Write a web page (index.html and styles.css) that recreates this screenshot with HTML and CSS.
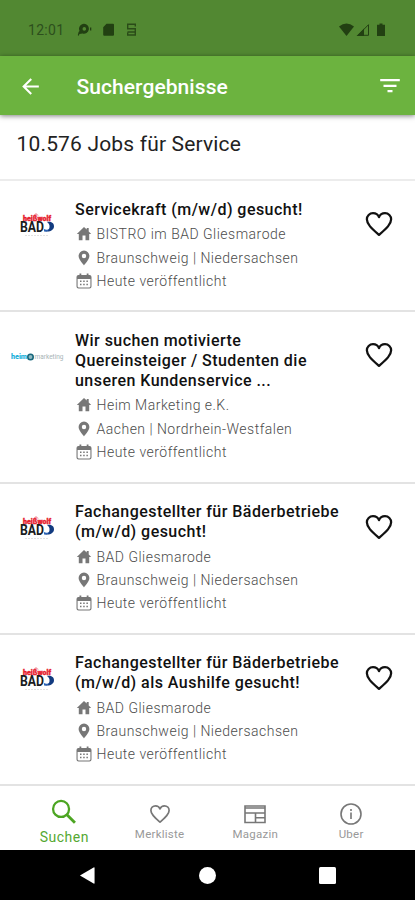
FILE: index.html
```html
<!DOCTYPE html>
<html lang="de">
<head>
<meta charset="utf-8">
<title>Suchergebnisse</title>
<link rel="stylesheet" href="styles.css">
</head>
<body>
<svg class="defs" width="0" height="0" aria-hidden="true">
  <symbol id="heart" viewBox="0 0 24 24"><path fill="none" stroke="currentColor" stroke-width="1.700" stroke-linejoin="round" d="M12 20.200C6.700 15.500 2.900 12.300 2.900 8.500 2.900 5.900 4.900 3.900 7.500 3.900c1.900 0 3.800 1.200 4.500 3 .7-1.800 2.600-3 4.500-3 2.600 0 4.600 2 4.600 4.600 0 3.800-3.800 7-9.100 11.700z"/></symbol>
  <symbol id="home" viewBox="0 0 16 16"><path d="M8 1 .8 8h2v6.200h3.700V9.600h3v4.600h3.700V8h2L12.700 5.400V2h-2v1.500z"/></symbol>
  <symbol id="pin" viewBox="0 0 16 16"><path fill-rule="evenodd" d="M8 .6a5.400 5.400 0 0 0-5.400 5.500C2.600 9.800 8 15.400 8 15.400s5.400-5.600 5.400-9.300A5.400 5.400 0 0 0 8 .6zm0 3.200a2.200 2.200 0 1 1 0 4.400 2.200 2.200 0 0 1 0-4.400z"/></symbol>
  <symbol id="calendar" viewBox="0 0 16 16"><path fill-rule="evenodd" d="M3.500.5h1.800V2h5.400V.5h1.800V2h1a2 2 0 0 1 2 2v9.500a2 2 0 0 1-2 2h-11a2 2 0 0 1-2-2V4a2 2 0 0 1 2-2h1zM1.600 6v7.300q0 1.100 1.100 1.100h10.600q1.100 0 1.100-1.100V6z"/><path d="M4 7.500h1.500V9H4zm3.200 0h1.500V9H7.200zm3.200 0h1.500V9h-1.500zM4 10.800h1.500v1.500H4zm3.200 0h1.500v1.500H7.200zm3.200 0h1.500v1.500h-1.500z"/></symbol>
  <symbol id="bad" viewBox="0 0 36 26">
    <path fill="#f3a0a8" d="M13 2.500 16 0 19 2.500z"/>
    <text x="3" y="7.600" class="bad-top" textLength="28" lengthAdjust="spacingAndGlyphs">heißwolf</text>
    <text x="0" y="19" class="bad-name" textLength="24" lengthAdjust="spacingAndGlyphs">BAD</text>
    <path fill="#123b80" d="M27 9c4-.8 7 1 7 4.300 0 4-4.500 6.200-9.500 4.900 3-.2 4.700-1.500 5-4 .3-2.200-.7-4.200-2.500-5.200z"/>
    <path fill="#2a62b4" d="M24 16c2 1.300 4 .8 5.500-.8-.7 2.700-3 3.800-5.500 3.200z"/>
    <path stroke="#e2e2e2" stroke-width="1.200" stroke-dasharray="2 1" d="M5 22.500h24"/>
  </symbol>
</svg>

<header class="status">
  <span class="clock">12:01</span>
  <svg class="s-left" viewBox="0 0 62 14"><path fill-rule="evenodd" d="M7 .8a5 5 0 1 1-1.500 9.800L2.500 11l-1 2L.8 12l.8-3L2.500 8A5 5 0 0 1 7 .8zm.3 3.300a1.800 1.800 0 1 0 0 3.600 1.800 1.800 0 0 0 0-3.600z"/><path d="M13 4.500h1.300v3H13zM29.500.8H36a1 1 0 0 1 1 1v10a1 1 0 0 1-1 1h-8.800a1 1 0 0 1-1-1V4.300z"/><path fill="none" stroke="#2a4b18" stroke-width="1.400" d="M58.300 3.500V1.300h-7.600v4.500h7.600V12h-7.600V9.500M50.500 9h8"/></svg>
  <svg class="s-right" viewBox="0 0 48 14"><path d="M0 3.500q7.500-6 15 0L7.500 13z"/><path fill="none" stroke="#224012" d="M19 12.300 29.500 1.700v10.600z"/><path d="M17.500 13 25 5.500V13zM40.500.5h3v1.300H46V13h-8V1.800h2.500z"/></svg>
</header>

<div class="appbar">
  <svg class="back" viewBox="0 0 24 24"><path d="M20 11H7.830l5.590-5.590L12 4l-8 8 8 8 1.410-1.410L7.830 13H20z"/></svg>
  <h1>Suchergebnisse</h1>
  <svg class="filter" viewBox="0 0 20 14"><path d="M.2 0h19.600v2.300H.2zM3.500 5.700h13V8h-13zM7.500 11h5v2.300h-5z"/></svg>
</div>

<main>
  <h2 class="count">10.576 Jobs für Service</h2>

  <article class="job one">
    <div class="logo"><svg class="bad"><use href="#bad"/></svg></div>
    <div class="info">
      <h3>Servicekraft (m/w/d) gesucht!</h3>
      <p><svg><use href="#home"/></svg><span>BISTRO im BAD Gliesmarode</span></p>
      <p><svg><use href="#pin"/></svg><span>Braunschweig | Niedersachsen</span></p>
      <p><svg><use href="#calendar"/></svg><span>Heute veröffentlicht</span></p>
    </div>
    <svg class="fav"><use href="#heart"/></svg>
  </article>

  <article class="job three">
    <div class="logo"><svg class="heim" viewBox="0 0 54 12"><text class="heim-a" x="0" y="8.300" textLength="16" lengthAdjust="spacingAndGlyphs">heim</text><circle cx="19.500" cy="6" r="2.700" fill="#8fb9c2" stroke="#18677c" stroke-width="1.600"/><text class="heim-b" x="23.500" y="8.300" textLength="29" lengthAdjust="spacingAndGlyphs">marketing</text></svg></div>
    <div class="info">
      <h3>Wir suchen motivierte<br>Quereinsteiger / Studenten die<br>unseren Kundenservice ...</h3>
      <p><svg><use href="#home"/></svg><span>Heim Marketing e.K.</span></p>
      <p><svg><use href="#pin"/></svg><span>Aachen | Nordrhein-Westfalen</span></p>
      <p><svg><use href="#calendar"/></svg><span>Heute veröffentlicht</span></p>
    </div>
    <svg class="fav"><use href="#heart"/></svg>
  </article>

  <article class="job two">
    <div class="logo"><svg class="bad"><use href="#bad"/></svg></div>
    <div class="info">
      <h3>Fachangestellter für Bäderbetriebe<br>(m/w/d) gesucht!</h3>
      <p><svg><use href="#home"/></svg><span>BAD Gliesmarode</span></p>
      <p><svg><use href="#pin"/></svg><span>Braunschweig | Niedersachsen</span></p>
      <p><svg><use href="#calendar"/></svg><span>Heute veröffentlicht</span></p>
    </div>
    <svg class="fav"><use href="#heart"/></svg>
  </article>

  <article class="job two">
    <div class="logo"><svg class="bad"><use href="#bad"/></svg></div>
    <div class="info">
      <h3>Fachangestellter für Bäderbetriebe<br>(m/w/d) als Aushilfe gesucht!</h3>
      <p><svg><use href="#home"/></svg><span>BAD Gliesmarode</span></p>
      <p><svg><use href="#pin"/></svg><span>Braunschweig | Niedersachsen</span></p>
      <p><svg><use href="#calendar"/></svg><span>Heute veröffentlicht</span></p>
    </div>
    <svg class="fav"><use href="#heart"/></svg>
  </article>
</main>

<nav class="tabs">
  <a class="tab active"><svg viewBox="0 0 24 24"><path fill="none" stroke="currentColor" stroke-width="1.700" d="M15.800 9.700a6 6 0 1 1-12 0 6 6 0 0 1 12 0z"/><path fill="none" stroke="currentColor" stroke-width="2.100" d="M14.200 14l6 6.100"/></svg><span>Suchen</span></a>
  <a class="tab"><svg><use href="#heart"/></svg><span>Merkliste</span></a>
  <a class="tab"><svg viewBox="0 0 24 24"><path fill="none" stroke="currentColor" stroke-width="1.600" d="M2 4h20v16.500H2zM2 6h20M2 11h20M12.500 11v9.500M12.500 15.800H22"/></svg><span>Magazin</span></a>
  <a class="tab"><svg viewBox="0 0 24 24"><circle cx="12" cy="12" r="10" fill="none" stroke="currentColor" stroke-width="1.600"/><path d="M11.200 10.500h1.600V17h-1.600zM11.200 7h1.600v2h-1.600z"/></svg><span>Uber</span></a>
</nav>

<footer class="system">
  <svg viewBox="0 0 16 18"><path d="M0 9 14.500.500q1-.4 1 .6v15.800q0 1-1 .6z"/></svg>
  <svg viewBox="0 0 16 16"><circle cx="8" cy="8" r="8"/></svg>
  <svg viewBox="0 0 17 17"><rect width="17" height="17" rx="1.500"/></svg>
</footer>
</body>
</html>
```
FILE: styles.css
```css
* { box-sizing: border-box; }
body {
  margin: 0;
  width: 415px;
  height: 900px;
  overflow: hidden;
  display: flex;
  flex-direction: column;
  background: #fff;
  font-family: Roboto, "Liberation Sans", sans-serif;
}
h1, h2, h3, p { margin: 0; }
svg { display: block; flex: none; fill: currentColor; }
.defs { display: none; }

.status {
  height: 56px;
  flex: none;
  display: flex;
  align-items: center;
  padding: 4px 28px 0 28px;
  background: #528832;
  color: #224012;
}
.clock { width: 49px; font-size: 14px; letter-spacing: .3px; color: #2d4f1d; }
.s-left { width: 62px; height: 14px; }
.s-right { width: 48px; height: 14px; margin-left: auto; }

.appbar {
  position: relative;
  height: 59px;
  flex: none;
  display: flex;
  align-items: center;
  padding: 1px 15px 0 18px;
  background: #6cb33f;
  color: #fff;
  box-shadow: 0 1px 5px rgba(0, 0, 0, .5);
}
.back { width: 25px; height: 25px; }
h1 { margin-left: 33.5px; font-size: 21px; font-weight: 500; line-height: 26px; padding-top: 1px; letter-spacing: .07px; }
.filter { width: 20px; height: 14px; margin-left: auto; }

.count {
  height: 66px;
  padding: 15px 17px 0 16.5px;
  border-bottom: 2px solid #ececec;
  font-size: 21px;
  font-weight: 400;
  line-height: 28px;
  letter-spacing: .17px;
  color: #222;
}
.job {
  display: flex;
  align-items: flex-start;
  border-bottom: 2px solid #e3e3e3;
}
.one { height: 131px; }
.three { height: 172px; }
.two { height: 151px; }
.logo { width: 75px; height: 26px; margin-top: 32px; display: flex; justify-content: center; align-items: center; }
.bad { width: 36px; height: 26px; }
.bad-top { font: 900 7.500px Roboto, sans-serif; fill: #e6202d; stroke: #e6202d; stroke-width: .4px; }
.bad-name { font: 700 14.500px Roboto, sans-serif; fill: #1a1c20; }
.heim { width: 54px; height: 12px; }
.heim-a { font: 900 7px Roboto, sans-serif; fill: #1eb1da; }
.heim-b { font: 400 7px Roboto, sans-serif; fill: #a7b3b6; }
.info { flex: 1; padding-top: 18px; }
.one .info, .three .info { padding-top: 19px; }
h3 { margin-bottom: 2.5px; font-size: 16px; font-weight: 500; line-height: 20.2px; letter-spacing: .46px; color: #111; white-space: nowrap; }
.three h3 { margin-bottom: 2px; }
.info p { display: flex; align-items: center; gap: 4.5px; height: 23.4px; padding-left: 1px; font-size: 14px; letter-spacing: .49px; color: #4c4c4c; font-weight: 300; white-space: nowrap; }
.info p svg { width: 16px; height: 16px; color: #777; }
.fav { width: 32px; height: 32px; margin: 27px 20px 0 0; color: #111; }

.tabs { flex: 1; display: flex; padding: 0 16px; color: #777; }
.tab { flex: 1; display: flex; flex-direction: column; align-items: center; padding-top: 16px; font-size: 11.500px; line-height: 14px; letter-spacing: .25px; }
.tab svg { width: 24px; height: 24px; }
.tab span { margin-top: 1px; color: #999; }
.active { padding-top: 10px; font-size: 14px; line-height: 18px; letter-spacing: .5px; color: #4ca522; }
.active svg { width: 32px; height: 32px; }
.active span { margin: 0 0 0 1px; color: #55a832; }

.system {
  height: 50px;
  flex: none;
  display: flex;
  align-items: center;
  justify-content: space-between;
  padding: 0 79px;
  background: #000;
  color: #fff;
}
.system svg { width: 17px; height: 17px; }
```
